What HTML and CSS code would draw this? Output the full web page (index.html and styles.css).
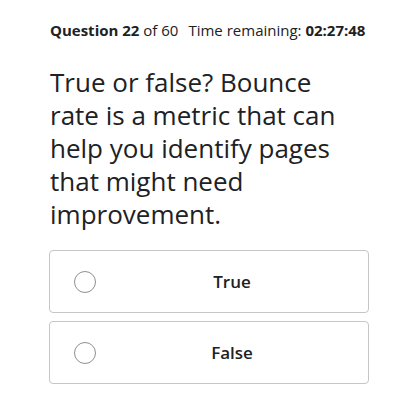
FILE: index.html
```html
<!DOCTYPE html>
<html lang="en">
<head>
    <meta charset="utf-8">
    <title>Quiz</title>
    <link rel="stylesheet" href="styles.css">
</head>
<body>
    <div class="quiz">
        <div class="quiz-status">
            <span><strong>Question 22</strong> of 60</span>
            <span>Time remaining: <strong>02:27:48</strong></span>
        </div>
        <p class="question">True or false? Bounce rate is a metric that can help you identify pages that might need improvement.</p>
        <div class="options">
            <label class="option">
                <span class="radio"></span>
                <span class="option-text">True</span>
            </label>
            <label class="option">
                <span class="radio"></span>
                <span class="option-text">False</span>
            </label>
        </div>
    </div>
</body>
</html>
```

FILE: styles.css
```css
body {
    font-family: 'Open Sans', sans-serif;
    background-color: #ffffff;
    color: #202124;
    margin: 0;
    padding: 0;
}
.quiz {
    padding: 21px 48px 20px 49px;
}
.quiz-status {
    display: flex;
    gap: 10px;
    font-size: 15px;
    line-height: 18px;
    padding-left: 1px;
    color: #202124;
}
.quiz-status strong {
    font-weight: 700;
}
.question {
    margin: 27px 0 19px 0;
    font-size: 26px;
    line-height: 33px;
    font-weight: 400;
    padding-left: 1px;
    padding-right: 18px;
}
.options {
    display: flex;
    flex-direction: column;
    gap: 8px;
}
.option {
    display: flex;
    align-items: center;
    height: 63px;
    box-sizing: border-box;
    border: 1px solid #c6c6c6;
    border-radius: 4px;
    padding-left: 24px;
    cursor: pointer;
}
.radio {
    width: 22px;
    height: 22px;
    box-sizing: border-box;
    border: 1.2px solid #8f8f8f;
    border-radius: 50%;
    flex-shrink: 0;
}
.option-text {
    flex: 1;
    text-align: center;
    font-size: 17px;
    font-weight: 600;
    color: #202124;
}
```
